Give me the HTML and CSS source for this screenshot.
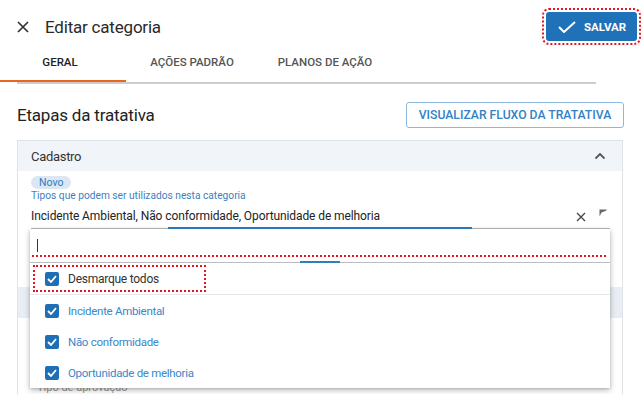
FILE: index.html
```html
<!DOCTYPE html>
<html lang="pt-BR">
<head>
<meta charset="utf-8">
<title>Editar categoria</title>
<link rel="stylesheet" href="styles.css">
</head>
<body>
<header class="topbar">
  <svg class="close" width="12" height="12" viewBox="0 0 12 12"><path d="M1 1L11 11M11 1L1 11" stroke="#333" stroke-width="1.7" fill="none"/></svg>
  <h1 class="title">Editar categoria</h1>
  <button class="save">
    <svg width="18" height="12" viewBox="0 0 18 12"><path d="M1 6L6 11L17 1" stroke="#fff" stroke-width="2" fill="none"/></svg>
    SALVAR
  </button>
</header>
<nav class="tabs">
  <div class="tab active">GERAL</div>
  <div class="tab t2">AÇÕES PADRÃO</div>
  <div class="tab t3">PLANOS DE AÇÃO</div>
</nav>
<div class="tabline"></div>
<main class="content">
  <div class="section-head">
    <h2 class="section-title">Etapas da tratativa</h2>
    <button class="outline-btn">VISUALIZAR FLUXO DA TRATATIVA</button>
  </div>
  <div class="card">
    <div class="card-head">
      <span>Cadastro</span>
      <svg width="12" height="8" viewBox="0 0 12 8"><path d="M1.5 6.5L6 2L10.5 6.5" stroke="#555" stroke-width="1.8" fill="none"/></svg>
    </div>
    <div class="card-body">
      <span class="chip">Novo</span>
      <div class="field-label">Tipos que podem ser utilizados nesta categoria</div>
      <div class="select">
        <span class="select-value">Incidente Ambiental, Não conformidade, Oportunidade de melhoria</span>
        <svg class="clear" width="10" height="10" viewBox="0 0 10 10"><path d="M1 1L9 9M9 1L1 9" stroke="#444" stroke-width="1.3" fill="none"/></svg>
        <svg class="flag" width="8" height="8" viewBox="0 0 8 8"><path d="M0.5 0.5H7.5V1.5L2.5 3.5L0.5 7.5Z" fill="#666"/></svg>
        <div class="dropdown">
          <div class="search">
            <span class="caret"></span>
            <div class="redline"></div>
          </div>
          <div class="opt-all">
            <div class="hl">
              <span class="cb"><svg width="10" height="8" viewBox="0 0 10 8"><path d="M1 4L4 7L9 1" stroke="#fff" stroke-width="1.8" fill="none"/></svg></span>
              <span>Desmarque todos</span>
            </div>
          </div>
          <div class="opt"><span class="cb"><svg width="10" height="8" viewBox="0 0 10 8"><path d="M1 4L4 7L9 1" stroke="#fff" stroke-width="1.8" fill="none"/></svg></span><span>Incidente Ambiental</span></div>
          <div class="opt"><span class="cb"><svg width="10" height="8" viewBox="0 0 10 8"><path d="M1 4L4 7L9 1" stroke="#fff" stroke-width="1.8" fill="none"/></svg></span><span>Não conformidade</span></div>
          <div class="opt"><span class="cb"><svg width="10" height="8" viewBox="0 0 10 8"><path d="M1 4L4 7L9 1" stroke="#fff" stroke-width="1.8" fill="none"/></svg></span><span>Oportunidade de melhoria</span></div>
        </div>
      </div>
      <div class="spacer"></div>
    </div>
    <div class="card-head second"></div>
    <div class="card-body lower">
      <span class="faint">Tipo de aprovação</span>
    </div>
  </div>
</main>
</body>
</html>
```
FILE: styles.css
```css
* { box-sizing: border-box; }
html, body { margin: 0; padding: 0; background: #fff; }
body { font-family: Roboto, "Noto Sans", Arial, sans-serif; color: #222; overflow: hidden; width: 642px; height: 394px; }

.topbar { display: flex; align-items: center; height: 53px; padding: 0 5px 0 17px; }
.close { flex: none; }
.title { margin: 0 0 0 16px; font-size: 17px; letter-spacing: -0.2px; font-weight: 400; color: #2a2a2a; flex: 1; line-height: 20px; }
.save { display: flex; align-items: center; gap: 8px; height: 29px; width: 91px; padding: 0 0 0 12px; border: none; border-radius: 3px; background: #1f71b8; color: #fff; font-family: Roboto, sans-serif; font-weight: 700; font-size: 11.5px; outline: 2px dotted #e4151f; outline-offset: 2px; }

.tabs { display: flex; height: 29px; }
.tab { font-size: 11.5px; font-weight: 500; color: #444; text-align: center; line-height: 19px; height: 29px; }
.tab.active { width: 126px; padding-right: 6px; color: #222; border-bottom: 2px solid #e8661e; }
.t2 { width: 132px; color: #555; }
.t3 { width: 134px; color: #555; }
.tabline { height: 2px; margin: 0 46px 0 17px; background: #cdcdcd; }

.content { padding: 0 18px 0 17px; }
.section-head { display: flex; align-items: center; justify-content: space-between; margin-top: 18px; height: 26px; }
.section-title { margin: 0; font-size: 17px; letter-spacing: -0.2px; font-weight: 400; color: #222; }
.outline-btn { height: 26px; width: 218px; border: 1px solid #8cb7de; border-radius: 3px; background: #fff; color: #3282c5; font-family: Roboto, sans-serif; font-size: 12.2px; font-weight: 500; padding: 0; }

.card { margin: 12px 1px 0 0; border: 1px solid #dfe3e8; border-bottom: none; }
.card-head { display: flex; align-items: center; justify-content: space-between; height: 30px; padding: 0 16px 0 13px; background: #f1f5f9; font-size: 13px; letter-spacing: -0.3px; color: #333; }
.card-body { padding: 5px 12px 0 13px; }
.chip { display: block; width: fit-content; height: 13px; line-height: 13px; padding: 0 8px; border-radius: 7px; background: #dbe7f3; color: #2f7bc2; font-size: 10.5px; }
.field-label { font-size: 10.2px; line-height: 14px; color: #3d7fbe; }
.select { position: relative; display: flex; align-items: center; height: 26px; padding: 0; border-bottom: 1px solid #b9b9b9; }
.select::after { content: ""; position: absolute; left: 137px; width: 304px; bottom: -1px; height: 2px; background: #2f7ec3; }
.select-value { flex: 1; font-size: 12px; letter-spacing: -0.1px; color: #222; }
.clear { margin-right: 13px; margin-top: 2px; }
.flag { margin-right: 3px; margin-top: -5px; }

.dropdown { position: absolute; z-index: 2; top: 26px; left: -1px; right: 0; height: 159px; background: #fff; box-shadow: 0 2px 6px rgba(0,0,0,0.28), 0 1px 2px rgba(0,0,0,0.12); }
.search { position: relative; padding: 10px 4px 5px 2px; border-bottom: 1px solid #bdbdbd; }
.search::after { content: ""; position: absolute; left: 270px; width: 40px; bottom: -1px; height: 2px; background: #2f7ec3; }
.caret { display: block; width: 1px; height: 13px; margin-left: 5px; background: #333; }
.redline { margin-top: 3px; height: 0; border-top: 2px dotted #e4151f; }
.opt-all { padding: 2px 0 0 3px; height: 32px; border-bottom: 1px solid #e8e8e8; }
.hl { display: flex; align-items: center; gap: 9px; width: 173px; height: 27px; padding-left: 10px; border: 2px dotted #e4151f; font-size: 12px; letter-spacing: -0.25px; color: #333; }
.opt { display: flex; align-items: center; gap: 9px; height: 31px; padding-left: 15px; font-size: 11.5px; letter-spacing: -0.3px; color: #3a87c9; }
.cb { display: flex; align-items: center; justify-content: center; width: 14px; height: 14px; border-radius: 2px; background: #1f6fb6; flex: none; }

.spacer { height: 58px; }
.card-head.second { height: 31px; background: #e9eef4; }
.card-body.lower { padding: 58px 0 0 19px; height: 90px; }
.faint { font-size: 11px; line-height: 14px; color: #999; }
```
